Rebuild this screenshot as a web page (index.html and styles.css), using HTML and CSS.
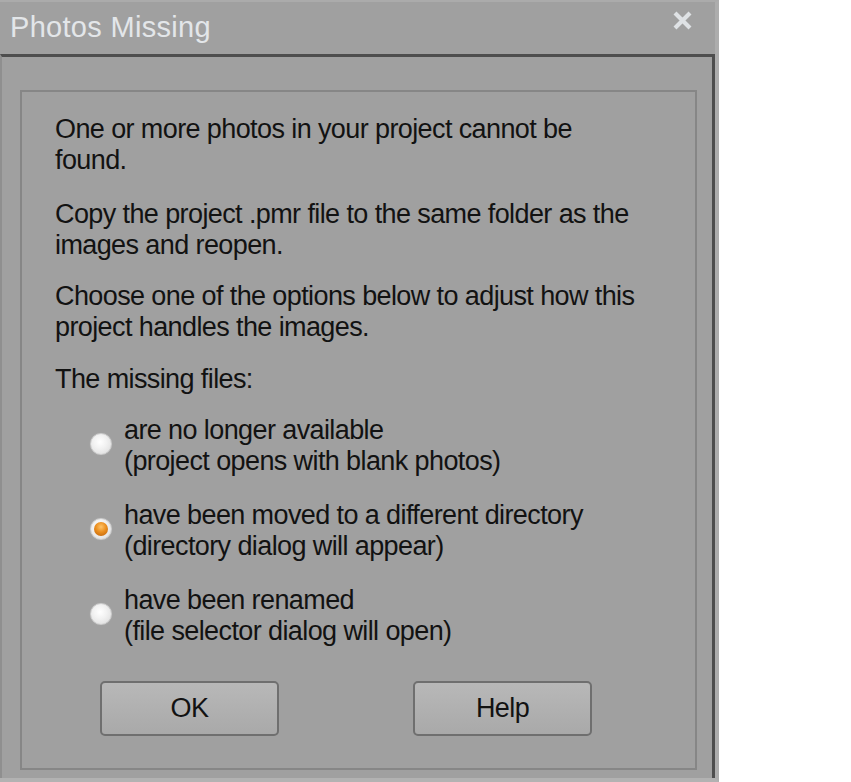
FILE: index.html
```html
<!DOCTYPE html>
<html lang="en">
<head>
<meta charset="utf-8">
<title>Photos Missing</title>
<link rel="stylesheet" href="styles.css">
</head>
<body>
<div class="window">
  <div class="titlebar">
    <span class="title">Photos Missing</span>
    <svg class="close" width="21" height="19" viewBox="0 0 21 19" aria-label="Close">
      <path d="M3 2 L18 17 M18 2 L3 17" stroke="#dfe2e5" stroke-width="4.2" stroke-linecap="butt" fill="none"/>
    </svg>
  </div>
  <div class="client">
    <div class="group">
      <p class="para p1">One or more photos in your project cannot be<br>found.</p>
      <p class="para p2">Copy the project .pmr file to the same folder as the<br>images and reopen.</p>
      <p class="para p3">Choose one of the options below to adjust how this<br>project handles the images.</p>
      <p class="para p4">The missing files:</p>
      <div class="options">
        <div class="option">
          <span class="radio"></span>
          <span class="label">are no longer available<br>(project opens with blank photos)</span>
        </div>
        <div class="option">
          <span class="radio checked"></span>
          <span class="label">have been moved to a different directory<br>(directory dialog will appear)</span>
        </div>
        <div class="option">
          <span class="radio"></span>
          <span class="label">have been renamed<br>(file selector dialog will open)</span>
        </div>
      </div>
      <div class="buttons">
        <button class="btn">OK</button>
        <button class="btn">Help</button>
      </div>
    </div>
  </div>
</div>
</body>
</html>
```

FILE: styles.css
```css
html, body {
  margin: 0;
  padding: 0;
  background: #ffffff;
}

body {
  font-family: "Liberation Sans", Arial, sans-serif;
  width: 851px;
  height: 782px;
  overflow: hidden;
}

.window {
  width: 715px;
  height: 776px;
  background: #a0a0a0;
  border-top: 2px solid #ababab;
  border-right: 4px solid #adadad;
  border-bottom: 4px solid #b2b2b2;
  display: flex;
  flex-direction: column;
}

.titlebar {
  height: 52px;
  flex: none;
  display: flex;
  align-items: center;
  justify-content: space-between;
  padding: 0 22px 0 10px;
}

.title {
  font-size: 29px;
  color: #e3e6e9;
  margin-top: -2px;
  letter-spacing: 0.3px;
}

.close {
  display: block;
  margin-top: -15px;
}

.client {
  flex: 1;
  display: flex;
  flex-direction: column;
  border-top: 3px solid #4e4e4e;
  border-right: 3px solid #4e4e4e;
  border-left: 2px solid #8f8f8f;
  padding: 33px 15px 8px 18px;
}

.group {
  flex: 1;
  border: 2px solid #868686;
  padding: 22px 20px 0 33px;
  color: #121212;
  font-size: 27px;
  letter-spacing: -0.6px;
  line-height: 31px;
}

.para {
  margin: 0;
}

.p1 { margin-bottom: 23px; }
.p2 { margin-bottom: 20px; }
.p3 { margin-bottom: 21px; }
.p4 { margin-bottom: 20px; }

.options {
  display: flex;
  flex-direction: column;
  gap: 23px;
  padding-left: 35px;
}

.option {
  display: flex;
  align-items: center;
  gap: 12px;
}

.label {
  display: block;
}

.radio {
  flex: none;
  width: 20px;
  height: 20px;
  border-radius: 50%;
  border: 1px solid #cdcdcd;
  background: radial-gradient(circle at 45% 40%, #ffffff 0, #f2f2f2 40%, #d9d9d9 100%);
  box-shadow: 0 0 1px #b8b8b8;
  margin-top: -4px;
  position: relative;
}

.radio.checked::after {
  content: "";
  position: absolute;
  left: 3px;
  top: 3px;
  width: 14px;
  height: 14px;
  border-radius: 50%;
  background: radial-gradient(circle at 50% 35%, #ffc46a 0, #eb8f1f 45%, #b95d08 100%);
}

.buttons {
  display: flex;
  gap: 134px;
  padding-left: 45px;
  margin-top: 34px;
}

.btn {
  width: 179px;
  height: 55px;
  border: 2px solid #6f6f6f;
  border-radius: 5px;
  background: linear-gradient(#b8b8b8, #a9a9a9);
  font-family: "Liberation Sans", Arial, sans-serif;
  font-size: 27px;
  letter-spacing: -0.6px;
  color: #121212;
  padding: 0;
}
```
